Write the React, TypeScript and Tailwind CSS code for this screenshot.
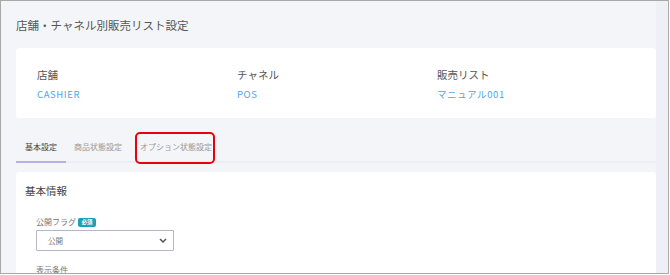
import React from "react";

const font = { fontFamily: '"Noto Sans CJK JP", "Noto Sans", sans-serif' };

export default function App() {
  return (
    <div
      className="w-[670px] h-[275px] overflow-hidden bg-white"
      style={font}
    >
      <div className="w-[669px] h-[274px] border border-[#a8a8a8] flex bg-[#f4f5f9] overflow-hidden">
        <div className="w-[655px] shrink-0 pl-[15px] flex flex-col">
          <div className="h-[47px] shrink-0 flex items-center text-[11.5px] text-[#555] pt-[2px] whitespace-nowrap">
            店舗・チャネル別販売リスト設定
          </div>
          <div className="w-[640px] h-[70px] shrink-0 bg-white rounded-[3px] grid grid-cols-[200px_200px_200px] pl-[21px] pt-[18px]">
            <div>
              <div className="text-[10.5px] leading-[18px] text-[#555]">店舗</div>
              <div className="text-[9.5px] leading-[20px] text-[#4ea6ec] tracking-[0.6px]">CASHIER</div>
            </div>
            <div>
              <div className="text-[10.5px] leading-[18px] text-[#555]">チャネル</div>
              <div className="text-[9.5px] leading-[20px] text-[#4ea6ec] tracking-[0.6px]">POS</div>
            </div>
            <div>
              <div className="text-[10.5px] leading-[18px] text-[#555]">販売リスト</div>
              <div className="text-[9.5px] leading-[20px] text-[#4ea6ec] tracking-[0.6px]">マニュアル001</div>
            </div>
          </div>
          <div className="mt-[13px] w-[640px] h-[32px] shrink-0 flex items-stretch border-b-2 border-[#eceef6] relative whitespace-nowrap">
            <div className="w-[50px] flex items-center justify-center pt-[2px] text-[8px] text-[#444] border-b-2 border-[#b6b1e4] mb-[-2px]">
              基本設定
            </div>
            <div className="w-[64px] flex items-center justify-center pt-[2px] text-[8px] text-[#999]">
              商品状態設定
            </div>
            <div className="relative w-[92px] flex items-center justify-center pt-[2px] text-[8px] text-[#999]">
              オプション状態設定
              <div className="absolute left-[5px] top-[1px] w-[80px] h-[32px] border-2 border-[#e8000b] rounded-[5px]" />
            </div>
          </div>
          <div className="mt-[9px] w-[640px] h-[120px] shrink-0 bg-white rounded-t-[3px] pl-[9px] pt-[10px]">
            <div className="text-[10.5px] text-[#444] leading-[18px]">基本情報</div>
            <div className="pl-[11px] mt-[15px]">
              <div className="flex items-center gap-[2px] h-[14px]">
                <span className="text-[8px] text-[#777]">公開フラグ</span>
                <span className="bg-[#1ba0b5] text-white text-[5.5px] leading-[8px] px-[2px] rounded-[2px] h-[9px] w-[18px] flex items-center justify-center font-bold">必須</span>
              </div>
              <div className="mt-[1px] w-[138px] h-[21px] border border-[#b5b6c8] rounded-[1px] flex items-center justify-between pl-[11px] pr-[6px]">
                <span className="text-[7.5px] text-[#777]">公開</span>
                <svg width="8" height="5" viewBox="0 0 8 5">
                  <path d="M1 1 L4 4 L7 1" fill="none" stroke="#555" strokeWidth="1.5" />
                </svg>
              </div>
              <div className="mt-[13px] text-[8px] text-[#777]">表示条件</div>
            </div>
          </div>
        </div>
        <div className="flex-1 bg-[#eff0f6]" />
      </div>
    </div>
  );
}
